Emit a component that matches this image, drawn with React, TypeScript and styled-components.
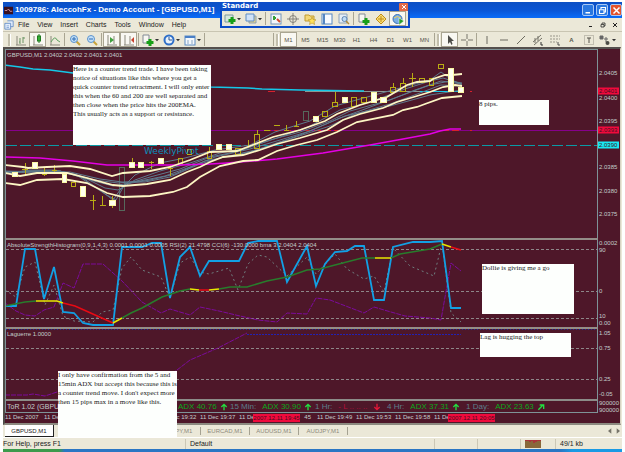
import React from 'react';
import styled, { createGlobalStyle, css } from 'styled-components';

const c = {
  face: '#ebe8d8',
  wine: '#4e1729',
  frame: '#7e9397',
  text: '#c3cdcb',
  cream: '#fdf6c4',
  cyan: '#14c8e8',
  teal: '#0a9aa6',
  magenta: '#e400e4',
  purple: '#86008c',
  yellow: '#b9ac14',
  red: '#f00a3c',
  green: '#0aa81a',
};

const Global = createGlobalStyle`
  * { box-sizing: border-box; }
  body { margin: 0; background: #fff; font-family: "Liberation Sans", Arial, sans-serif; }
  button { font-family: inherit; border: 0; padding: 0; margin: 0; background: none; color: inherit; }
`;

const Desktop = styled.div`
  min-height: 100vh;
  display: flex;
  flex-direction: column;
  padding-top: 2px;
`;

const Window = styled.main`
  position: relative;
  flex: 1;
  display: flex;
  flex-direction: column;
  margin: 0 3px;
  background: ${c.face};
`;

const Taskbar = styled.div`
  height: 3px;
  margin: 0 3px;
  background: linear-gradient(90deg, #3c9a4c 0 9%, #2a76c4 10% 90%, #1a9ae4 92%);
`;

/* ---------- title and menu ---------- */

const TitleBar = styled.header`
  display: flex;
  align-items: center;
  height: 16px;
  padding: 0 0 0 1px;
  background: linear-gradient(#0c50c4, #0a55d4 50%, #0a6cf8);
  color: #fff;
`;

const Title = styled.h1`
  flex: 1;
  margin: 0 0 0 2px;
  font: bold 8px/16px "Liberation Sans", Arial, sans-serif;
  white-space: nowrap;
`;

const WindowButton = styled.button<{ $close?: boolean }>`
  display: grid;
  place-items: center;
  width: 12px;
  height: 12px;
  margin-left: 2px;
  border: 1px solid #a8c8f4;
  border-radius: 2px;
  background: ${(p) => (p.$close ? '#e2532c' : '#2a78e0')};
`;

const MenuBar = styled.nav`
  display: flex;
  align-items: center;
  gap: 4px;
  height: 13px;
  padding: 0 3px 0 1px;
  color: #222;
`;

const Menus = styled.div`
  flex: 1;
  display: flex;
  gap: 8px;
`;

const MenuItem = styled.button`
  font-size: 7px;
  line-height: 12px;
`;

const MdiButton = styled.button`
  display: grid;
  place-items: center;
  width: 8px;
  height: 10px;
`;

const Spacer = styled.span`
  flex: 1;
`;

/* ---------- toolbars ---------- */

const ToolBar = styled.div`
  display: flex;
  align-items: center;
  height: 16px;
  padding: 0 4px;
  border-top: 1px solid #c9c5b2;
`;

const Tool = styled.button<{ $on?: boolean; $wide?: boolean }>`
  display: flex;
  align-items: center;
  justify-content: center;
  gap: 1px;
  width: ${(p) => (p.$wide ? 21 : 17)}px;
  height: 15px;
  font-size: 6px;
  color: #55534a;
  ${(p) =>
    p.$on &&
    css`
      background: #f9f8f2;
      border: 1px solid #a9a592;
    `}
`;

const Divider = styled.span`
  width: 1px;
  height: 13px;
  margin: 0 1px;
  background: #a9a592;
`;

const Grip = styled.span`
  width: 3px;
  height: 12px;
  margin: 0 1px;
  background: #c2beac;
  border-right: 1px solid #fff;
`;

const FloatingBar = styled.section`
  position: absolute;
  left: 217px;
  top: 0;
  width: 190px;
  padding: 0 2px 2px;
  background: #0c4cc8;
`;

const FloatingTitle = styled.div`
  display: flex;
  justify-content: space-between;
  align-items: center;
  height: 9px;
  font: bold 7px/9px "DejaVu Sans", sans-serif;
  color: #fff;
`;

const FloatingClose = styled.button`
  display: grid;
  place-items: center;
  width: 9px;
  height: 8px;
  border-radius: 1px;
  background: #e26a48;
`;

const FloatingTools = styled.div`
  display: flex;
  align-items: center;
  height: 15px;
  background: ${c.face};
`;

/* ---------- charts ---------- */

const ChartArea = styled.section`
  flex: 1;
  display: grid;
  grid-template-rows: 189fr 89fr 72fr 14px 10px;
  margin: 0 1px 0 0;
  border-top: 2px solid #55504e;
  border-bottom: 2px solid #8c8a80;
  border-left: 2px solid #4f4c48;
  border-right: 1px solid #d8d4c4;
  background: ${c.wine};
  color: ${c.text};
  font-size: 6px;
`;

const Row = styled.div`
  display: grid;
  grid-template-columns: 1fr 22px;
  min-height: 0;
`;

const Plot = styled.div<{ $rule: number }>`
  position: relative;
  min-height: 0;
  border-top: ${(p) => p.$rule}px solid ${(p) => (p.$rule > 1 ? '#948d88' : c.frame)};
  border-left: 1px solid ${c.frame};
  border-right: 1px solid ${c.frame};
`;

const Drawing = styled.svg`
  position: absolute;
  inset: 0;
  width: 100%;
  height: 100%;
  fill: none;
`;

const Legend = styled.div`
  position: absolute;
  left: 1px;
  top: 1px;
  line-height: 8px;
  white-space: nowrap;
`;

const PivotLabel = styled.div`
  position: absolute;
  left: 138px;
  top: 95px;
  font: 9px/12px "DejaVu Sans", sans-serif;
  color: #0b8fba;
`;

const Axis = styled.div`
  position: relative;
`;

const AxisLabel = styled.span<{ $at: number; $bg?: string }>`
  position: absolute;
  left: 0;
  top: ${(p) => p.$at}%;
  width: 21px;
  padding-left: 1px;
  transform: translateY(-50%);
  line-height: 7px;
  white-space: nowrap;
  background: ${(p) => p.$bg || 'none'};
  color: ${(p) => (p.$bg ? '#401020' : c.text)};
`;

const Trends = styled.div`
  display: grid;
  grid-template-columns: 172px 52px 85px 72px 79px 1fr;
  align-items: center;
  border: 1px solid ${c.frame};
  border-top-width: 2px;
  border-top-color: #8c8c88;
  font-size: 8px;
  line-height: 10px;
  white-space: nowrap;
`;

const Trend = styled.div`
  display: flex;
  align-items: center;
  gap: 6px;
  color: #5d7e8c;
`;

const TrendLead = styled.span`
  padding-left: 1px;
  font-size: 7px;
  color: ${c.text};
`;

const Adx = styled.span<{ $down?: boolean }>`
  display: flex;
  align-items: center;
  gap: 3px;
  color: ${(p) => (p.$down ? '#c01038' : c.green)};
`;

const Dim = styled.span`
  width: 32px;
  color: #b0103c;
`;

const TimeAxis = styled.div`
  position: relative;
  display: grid;
  grid-template-columns: repeat(12, 39px);
  overflow: hidden;
  line-height: 9px;
  white-space: nowrap;
`;

const TimeLabel = styled.span<{ $end?: boolean }>`
  text-align: ${(p) => (p.$end ? 'right' : 'left')};
  padding-right: ${(p) => (p.$end ? 6 : 0)}px;
`;

const TimeMark = styled.span<{ $x: number }>`
  position: absolute;
  left: ${(p) => p.$x}px;
  top: 1px;
  width: 47px;
  text-align: center;
  line-height: 8px;
  color: #4a0c1c;
  background: ${c.red};
`;

const Note = styled.aside<{ $x: number; $y: number; $w: number; $h: number }>`
  position: absolute;
  left: ${(p) => p.$x}px;
  top: ${(p) => p.$y}px;
  width: ${(p) => p.$w}px;
  height: ${(p) => p.$h}px;
  background: #fdfffd;
  color: #181818;
  font: 7px/9px "Liberation Serif", "Times New Roman", serif;
  white-space: pre;
`;

/* ---------- tabs and status ---------- */

const Tabs = styled.div`
  display: flex;
  align-items: center;
  height: 12px;
  padding-left: 2px;
  color: #8d8a7c;
`;

const Tab = styled.button<{ $on?: boolean }>`
  width: 49px;
  height: ${(p) => (p.$on ? 12 : 8)}px;
  font-size: 6px;
  line-height: 8px;
  border-right: 1px solid ${(p) => (p.$on ? '#222' : '#a5a292')};
  ${(p) =>
    p.$on &&
    css`
      color: #222;
      background: #fff;
      border-bottom: 1px solid #222;
    `}
`;

const Status = styled.footer`
  display: grid;
  grid-template-columns: 182px 1fr 43px 43px 35px 67px;
  align-items: center;
  height: 12px;
  border-top: 1px solid #fff;
  font-size: 7px;
  line-height: 10px;
  color: #222;
`;

const Cell = styled.span`
  display: flex;
  align-items: center;
  height: 10px;
  padding-left: 4px;
  border-left: 1px solid #cbc7b5;
  &:first-child { padding-left: 0; border: 0; }
`;

/* ---------- icons ---------- */

const paths: Record<string, React.ReactNode> = {
  app: (<><rect y="1" width="12" height="10" fill="#3a1020" /><path d="M1 6h3l2-2 2 3h3" stroke="#e8b0c0" /></>),
  doc: (<><path d="M1 4h7v7H1z M4 1h7v7H8" stroke="#5b87c4" fill="#e4eefb" /><path d="M3 7h3M3 9h3" stroke="#7fa4d6" /></>),
  bars: (<><path d="M1 11h10M2 2v9" stroke="#8b897c" /><path d="M5 4v6M4 8h1M8 3v6M8 4h2" stroke="#6b9464" /></>),
  candle: (<><path d="M1 11h10M2 2v9" stroke="#8b897c" /><path d="M7 0v9" stroke="#1e7a1e" /><rect x="5.5" y="2" width="3" height="5" fill="#35b035" stroke="#1e7a1e" /></>),
  line: (<><path d="M1 11h10M2 2v9" stroke="#8b897c" /><path d="M2 8q4-7 6-2l3 2" stroke="#5fa060" /></>),
  zoomIn: (<><path d="M7 7l4 4" stroke="#c8a23a" strokeWidth="2" /><circle cx="5" cy="5" r="3.5" fill="#c4e0f8" stroke="#5c93cc" /><path d="M3 5h4M5 3v4" stroke="#2e6cb4" /></>),
  zoomOut: (<><path d="M7 7l4 4" stroke="#c8a23a" strokeWidth="2" /><circle cx="5" cy="5" r="3.5" fill="#c4e0f8" stroke="#5c93cc" /><path d="M3 5h4" stroke="#2e6cb4" /></>),
  scroll: (<><path d="M1 11h10M2 1v10M8 2v8" stroke="#8b897c" /><path d="M4 3l4 3-4 3z" fill="#3fa03f" /></>),
  shift: (<><path d="M1 11h10M2 1v10M7 2v8" stroke="#8b897c" /><path d="M11 3L8 6l3 3z" fill="#c8402c" /></>),
  addDoc: (<><path d="M1 1h6v8H1z" fill="#f7f7f2" stroke="#838b95" /><path d="M8 5v7M4.5 8.5h7" stroke="#18a018" strokeWidth="3" /></>),
  clock: (<><circle cx="6" cy="6" r="4.5" fill="#e8f2fc" stroke="#2f6fc8" strokeWidth="2" /><path d="M6 3v3h3" stroke="#31578e" /></>),
  template: (<><rect x="1" y="2" width="10" height="9" fill="#f4f8fc" stroke="#5d8cc4" /><path d="M1 3h10" stroke="#4a7fc6" strokeWidth="2" /><path d="M3 7h2M7 7h2M3 9h2M7 9h2" stroke="#8ea8c4" /></>),
  newChart: (<><path d="M1 2h8v7H1z" fill="#d8e8dc" stroke="#7d98a0" /><path d="M8 4v7M4.5 7.5h7" stroke="#18a018" strokeWidth="3" /></>),
  profiles: (<><path d="M4 3h7v7H4z" fill="#e3d38c" stroke="#8aa0b8" /><path d="M1 1h8v7H1z" fill="#cfe2f8" stroke="#5d8cc4" /></>),
  market: (<><rect x="1" y="1" width="10" height="10" fill="#f2f6fa" stroke="#7394b8" /><path d="M4 3v4M3 5h3" stroke="#36a036" strokeWidth="2" /><path d="M7 6l3 3" stroke="#d04a2c" strokeWidth="2" /></>),
  target: (<><circle cx="6" cy="6" r="3.5" stroke="#85837a" /><path d="M6 0v12M0 6h12" stroke="#85837a" /></>),
  star: (<><path d="M1 2h4l1 1h4v5H1z" fill="#f3d877" stroke="#c09a30" /><path d="M8 4l1 2.5 3 .3-2 1.7.6 3L8 10l-2.5 1.5.6-3-2-1.7 3-.3z" fill="#ffe25a" stroke="#b8922a" strokeWidth=".6" /></>),
  terminal: (<><rect x="1" y="1" width="10" height="10" fill="#f8fbff" stroke="#5587c2" /><path d="M3 1v10" stroke="#5587c2" strokeWidth="2" /></>),
  tester: (<><path d="M1 1h8v9H1z" fill="#e4edf6" stroke="#8ca2b8" /><circle cx="6.5" cy="6" r="2.5" fill="#bfdcf6" stroke="#5e86b4" /><path d="M8 8l3 3" stroke="#b08c3c" strokeWidth="1.5" /></>),
  editor: (<path d="M6 1l5 5-5 5-5-5z M6 3v6M3 6h6" fill="#f8dc70" stroke="#c08c18" />),
  expert: (<><circle cx="5.5" cy="6" r="4.5" fill="#78aee4" stroke="#3b70b4" /><path d="M2 5q3-3 7 0" stroke="#f0d060" /><path d="M7 5l5 3-5 4z" fill="#27a02a" stroke="#fff" strokeWidth=".5" /></>),
  cursor: (<path d="M4 1v9l2-2 1.5 3 1-1L7.5 7H10z" fill="#4c4c48" />),
  cross: (<path d="M6 0v5M6 7v5M0 6h5M7 6h5" stroke="#77756a" />),
  vline: <path d="M6 2v8" stroke="#6d6b60" />,
  hline: <path d="M2 6h8" stroke="#6d6b60" />,
  trend: <path d="M2 10l8-8" stroke="#6d6b60" />,
  channel: (<><path d="M1 8l8-7M2 11l8-7M3 4v5M6 2v5" stroke="#77756a" /><path d="M9 8v3h2" stroke="#333" /></>),
  fibo: (<><path d="M1 2h10M1 5h10M1 8h7" stroke="#99968a" strokeDasharray="2 1" /><path d="M9 8v3h2" stroke="#555" /></>),
  labelT: (<><rect x="1.5" y="1.5" width="9" height="9" stroke="#99968a" strokeDasharray="1 1" /><path d="M4 4h4M6 4v5" stroke="#55534a" /></>),
  shapes: (<><path d="M1 2h3v3H1z M5 5h4M7 3v5" fill="#666" stroke="#666" /><circle cx="8.5" cy="9" r="2" fill="#4b4b46" /></>),
  up: <path d="M6 11V2M2 6l4-4 4 4" stroke="#22e040" strokeWidth="2" />,
  down: <path d="M6 1v9M2 6l4 4 4-4" stroke="#e41838" strokeWidth="2" />,
  upRight: <path d="M2 10l7-7M4 3h6v6" stroke="#22e040" strokeWidth="2" />,
  min: <path d="M2 9h6" stroke="currentColor" strokeWidth="2" />,
  restore: <path d="M2 5h6v5H2z M4 4V2h6v6H8" stroke="currentColor" strokeWidth="1.5" />,
  close: <path d="M2 2l8 8M10 2l-8 8" stroke="currentColor" strokeWidth="2" />,
  drop: <path d="M0 3h12L6 10z" fill="#333" />,
  left: <path d="M8 2v8L3 6z" fill="#77756a" />,
  right: <path d="M4 2v8l5-4z" fill="#77756a" />,
};

const Svg = styled.svg`
  display: block;
  flex: none;
`;

const Icon = ({ name, size = 12 }: { name: string; size?: number }) => (
  <Svg width={size} height={size} viewBox="0 0 12 12" fill="none" aria-hidden>
    {paths[name]}
  </Svg>
);

const IconTool = ({ name, on, drop }: { name: string; on?: boolean; drop?: boolean }) => (
  <Tool $on={on} $wide={drop} aria-label={name}>
    <Icon name={name} />
    {drop && <Icon name="drop" size={4} />}
  </Tool>
);

/* ---------- chart data, in chart units ---------- */

const upper = '5,165 23,167 28,168 47,167 70,166 90,169 112,176 123,173 150,171 170,167 190,160 210,152 237,151 250,146 273,137 300,130 325,121 337,114 360,105 387,97 407,85 417,82 430,81 433,79 445,75 452,75 462,74';
const middle = '5,173 20,176 37,173 67,173 87,178 113,185 123,186 147,184 170,180 187,172 200,167 210,162 223,157 243,155 260,150 277,144 300,138 327,130 343,120 360,114 383,108 397,102 417,96 430,92 443,87 455,85 462,86';
const lower = '5,183 20,185 37,180 63,179 87,183 107,193 123,197 150,196 173,192 187,187 200,177 220,166 243,161 258,160 277,151 297,145 317,140 337,132 357,122 393,115 403,110 417,107 425,104 442,98 462,96';
const averages = [
  '5,174 30,170 55,170 80,176 100,190 113,200 120,190 135,175 160,163 185,158 215,150 250,145 275,132 310,121 335,106 360,99 400,88 430,80 441,72 452,80 462,85',
  '5,173 30,171 60,171 85,178 105,188 118,190 135,180 160,171 190,163 220,153 250,147 280,137 310,126 340,110 370,102 405,89 430,81 443,78 462,84',
  '5,172 30,171 60,171 90,180 113,186 130,183 150,177 180,169 210,157 240,151 270,140 300,132 330,121 350,111 390,100 415,90 441,81 462,84',
  '5,172 40,171 65,172 95,180 118,183 140,181 165,176 190,167 215,157 250,149 280,140 310,131 340,118 365,109 400,96 430,85 450,81 462,83',
  '5,171 40,172 70,172 100,179 122,182 145,182 170,177 200,164 220,158 260,149 290,139 330,126 355,114 390,104 420,93 441,85 462,86',
  '5,172 40,173 75,174 105,194 116,200 125,184 150,180 175,174 205,161 250,152 300,135 345,116 390,106 430,95 462,90',
];

const filled = [
  [12, 172, 6, 4], [32, 162, 6, 6], [62, 174, 5, 8], [80, 186, 6, 10], [109, 200, 7, 5], [129, 162, 6, 5],
  [138, 162, 6, 5], [158, 158, 6, 5], [216, 144, 6, 5], [226, 144, 6, 5], [313, 116, 6, 5], [342, 97, 6, 5],
  [371, 92, 6, 10], [380, 97, 7, 5], [448, 68, 6, 23], [458, 87, 6, 5],
];
const hollow = [
  [71, 182, 5, 4], [178, 158, 5, 5], [187, 149, 5, 5], [207, 151, 5, 7], [235, 148, 6, 6], [254, 134, 6, 14],
  [322, 111, 6, 5], [332, 102, 6, 4], [351, 97, 6, 9], [361, 97, 6, 5], [390, 87, 6, 5],
  [400, 83, 6, 8], [419, 78, 6, 4], [429, 78, 5, 7], [438, 64, 6, 4],
];
const ghosts = [[119, 167, 6, 43], [303, 111, 6, 9]];
const wicks = 'M25.5 163v12M22 169.5h6M44.5 168v8M42 174.5h5M54.5 165v7M52 170.5h5M93.5 195v15M90 200.5h6M102.5 196v10M100 205.5h6M112.5 196v12M132.5 158v4M151.5 161v8M149 162.5h5M170.5 165v11M168 168.5h5M209.5 147v4M248.5 140v8M257.5 130v4M264 130.5h6M274 125.5h6M286.5 125v5M284 130.5h5M296.5 121v5M294 126.5h5M335.5 92v10M393.5 83v4M403.5 78v5M412.5 73v14M409 78.5h7';

const strength = '5,306 16,306 25,249 35,249 44,299 54,267 63,312 74,313 83,323 93,325 113,325 122,247 142,247 152,243 161,243 170,298 180,257 190,247 200,276 209,261 239,261 248,243 258,241 277,241 287,282 307,246 316,286 325,264 335,252 347,251 355,246 364,246 374,300 384,300 393,247 413,242 430,242 442,241 451,308 461,308';
const rsi = '5,290 16,297 25,267 35,262 45,305 54,285 63,316 74,321 93,322 102,312 113,310 122,268 131,257 142,270 161,277 170,298 180,263 190,257 200,272 209,274 229,268 238,290 248,264 258,255 267,257 287,276 307,257 316,274 335,254 347,269 364,279 374,276 384,292 393,248 410,266 434,276 442,243 451,313 461,322';
const cci = '5,303 16,311 25,315 35,316 44,310 54,307 63,283 74,288 83,264 103,264 122,281 142,302 161,313 170,309 190,315 200,307 219,311 240,316 258,320 277,322 287,313 307,314 316,298 330,300 364,313 374,307 384,310 405,316 430,318 441,320 451,263 461,271';
const smoothed: [string, string][] = [
  ['#287c2c', '5,306 25,302 36,301'], ['#e8e800', '36,301 57,301 63,303'], ['#e80a14', '63,303 75,306 113,323'],
  ['#e8e800', '113,323 122,318'], ['#287c2c', '122,318 131,313 142,308 162,297 180,291 190,289'],
  ['#e8e800', '190,289 199,290'], ['#e80a14', '199,290 209,290'], ['#e8e800', '209,290 219,289'],
  ['#287c2c', '219,289 230,287 247,287 267,281 287,277 307,270 320,269 335,265 362,258 375,258'],
  ['#e8e800', '375,258 391,258'], ['#287c2c', '391,258 400,254 430,249 442,244'],
  ['#e8e800', '442,244 451,247'], ['#e80a14', '451,247 461,250'],
];

const rects = (list: number[][], fill: string, stroke: string) =>
  list.map(([x, y, w, h]) => (
    <rect key={`${x}-${y}`} x={x + 0.5} y={y + 0.5} width={w - 1} height={h} fill={fill} stroke={stroke} />
  ));

const Levels = ({ at }: { at: number[] }) => (
  <>
    {at.map((y) => (
      <path key={y} d={`M6 ${y + 0.5}H597`} stroke="#8d8688" strokeDasharray="3 2" />
    ))}
  </>
);

const Scale = ({ from, span, items }: { from: number; span: number; items: [number, string, string?][] }) => (
  <Axis>
    {items.map(([y, label, bg]) => (
      <AxisLabel key={y} $at={((y - from) / span) * 100} $bg={bg}>{label}</AxisLabel>
    ))}
  </Axis>
);

const times = [
  '11 Dec 2007', '11 Dec 19:16', '11 Dec 19:20', '11 Dec 19:24', '11 Dec 19:32', '11 Dec 19:37',
  '11 De', '45', '11 Dec 19:49', '11 Dec 19:53', '11 Dec 19:58', '11 De',
];

export default function App() {
  return (
    <Desktop>
      <Global />
      <Window>
        <TitleBar>
          <Icon name="app" size={9} />
          <Title>1009786: AleccohFx - Demo Account - [GBPUSD,M1]</Title>
          <WindowButton aria-label="Minimize"><Icon name="min" size={9} /></WindowButton>
          <WindowButton aria-label="Restore"><Icon name="restore" size={9} /></WindowButton>
          <WindowButton $close aria-label="Close"><Icon name="close" size={9} /></WindowButton>
        </TitleBar>

        <MenuBar>
          <Icon name="doc" size={10} />
          <Menus>
            {['File', 'View', 'Insert', 'Charts', 'Tools', 'Window', 'Help'].map((m) => (
              <MenuItem key={m}>{m}</MenuItem>
            ))}
          </Menus>
          <MdiButton aria-label="Minimize chart"><Icon name="min" size={6} /></MdiButton>
          <MdiButton aria-label="Restore chart"><Icon name="restore" size={6} /></MdiButton>
          <MdiButton aria-label="Close chart"><Icon name="close" size={6} /></MdiButton>
        </MenuBar>

        <ToolBar>
          <Grip />
          <IconTool name="bars" />
          <IconTool name="candle" on />
          <IconTool name="line" />
          <Divider />
          <IconTool name="zoomIn" />
          <IconTool name="zoomOut" />
          <Divider />
          <IconTool name="scroll" on />
          <IconTool name="shift" on />
          <Divider />
          <IconTool name="addDoc" drop />
          <IconTool name="clock" drop />
          <IconTool name="template" drop />
          <Divider />
          <Spacer />
          <Divider />
          <Grip />
          {['M1', 'M5', 'M15', 'M30', 'H1', 'H4', 'D1', 'W1', 'MN'].map((t) => (
            <Tool key={t} $on={t === 'M1'}>{t}</Tool>
          ))}
          <Divider />
          <Grip />
          <IconTool name="cursor" on />
          <IconTool name="cross" />
          <Divider />
          <IconTool name="vline" />
          <IconTool name="hline" />
          <IconTool name="trend" />
          <IconTool name="channel" />
          <IconTool name="fibo" />
          <Tool><b>A</b></Tool>
          <IconTool name="labelT" />
          <IconTool name="shapes" drop />
        </ToolBar>

        <ChartArea>
          <Row>
            <Plot $rule={1}>
              <Drawing viewBox="6 50 591 188" preserveAspectRatio="none">
                <path d="M6 130.5H597" stroke={c.purple} />
                <path d="M6 145.5H597" stroke={c.teal} strokeDasharray="11 3" />
                <path d="M305 91.5H462" stroke="#8b9792" />
                <polyline points="5,65 20,67 33,69 50,70 73,73 140,81 211,87 248,88 262,89 300,90 364,91" stroke={c.cyan} strokeWidth="1.5" />
                <path d="M420 91.5h41" stroke={c.cyan} />
                <path d="M268 91.5h10M264 130.5h74M470 91.5h2M442 130.5h18M470 130.5h2" stroke="#d8202c" strokeDasharray="7 3" />
                {rects(ghosts, 'none', '#56685c')}
                {averages.map((p) => (
                  <polyline key={p} points={p} stroke="#5f7b8d" />
                ))}
                <path d={wicks} stroke={c.yellow} />
                {rects(hollow, 'none', c.yellow)}
                <polyline points="5,157 40,158 73,161 107,165 127,165 180,165 210,164 227,163 253,161 277,159 323,153 370,145 403,139 430,134 440,131 450,129 461,129" stroke={c.magenta} strokeWidth="1.5" />
                {[upper, middle, lower].map((p) => (
                  <polyline key={p} points={p} stroke={c.cream} strokeWidth="1.8" />
                ))}
                {rects(filled, '#ffffee', '#fbf9a4')}
              </Drawing>
              <Legend>GBPUSD,M1 2.0402 2.0402 2.0401 2.0401</Legend>
              <PivotLabel>WeeklyPivot</PivotLabel>
            </Plot>
            <Scale
              from={49}
              span={189}
              items={[
                [73, '2.0405'], [98, '2.0400'], [91, '2.0401', c.red], [121, '2.0395'], [130, '2.0393', c.red],
                [145, '2.0390', '#18e8f4'], [167, '2.0385'], [191, '2.0380'], [214, '2.0375'],
              ]}
            />
          </Row>

          <Row>
            <Plot $rule={2}>
              <Drawing viewBox="6 240 591 87" preserveAspectRatio="none">
                <Levels at={[249, 291, 318]} />
                <polyline points={rsi} stroke="#6f7f80" strokeDasharray="2 3" />
                <polyline points={cci} stroke="#7c0b9c" strokeDasharray="5 1" />
                <polyline points={strength} stroke="#12a0e4" strokeWidth="1.8" />
                {smoothed.map(([color, p]) => (
                  <polyline key={p} points={p} stroke={color} strokeWidth="1.5" />
                ))}
              </Drawing>
              <Legend>AbsoluteStrengthHistogram(0,9,1,4,3) 0.0001 0.0001 0.0005 RSI(2) 21.4798 CCI(6) -130.0000 bma 3 2.0404 2.0404</Legend>
            </Plot>
            <Scale from={238} span={89} items={[[243, '0.0002'], [250, '90'], [291, '0'], [316, '10'], [323, '0.00']]} />
          </Row>

          <Row>
            <Plot $rule={2}>
              <Drawing viewBox="6 329 591 70" preserveAspectRatio="none">
                <path d="M6 329.5H597" stroke="#1c2aa0" strokeDasharray="1 2" />
                <Levels at={[348, 379]} />
                <path d="M247 334.5H461" stroke="#2222b4" strokeDasharray="2 1" />
                <polyline points="5,395 27,395 33,394 45,396 60,391 150,391 177,370 190,360 218,348 247,333" stroke="#7c0b9c" strokeDasharray="5 1" />
              </Drawing>
              <Legend>Laguerre 1.0000</Legend>
            </Plot>
            <Scale from={327} span={72} items={[[333, '1.05'], [348, '0.75'], [379, '0.25'], [394, '-0.05']]} />
          </Row>

          <Row>
            <Trends>
              <TrendLead>ToR 1.02 (GBPUSD</TrendLead>
              <Trend><Adx>ADX 40.76 <Icon name="up" size={8} /></Adx></Trend>
              <Trend>15 Min:<Adx>ADX 30.90 <Icon name="up" size={8} /></Adx></Trend>
              <Trend>1 Hr:<Adx $down><Dim>- L .. .. ..</Dim><Icon name="down" size={8} /></Adx></Trend>
              <Trend>4 Hr:<Adx>ADX 37.31 <Icon name="up" size={8} /></Adx></Trend>
              <Trend>1 Day:<Adx>ADX 23.63 <Icon name="upRight" size={8} /></Adx></Trend>
            </Trends>
            <Scale from={0} span={14} items={[[4, '900000'], [11, '900000']]} />
          </Row>

          <TimeAxis>
            {times.map((t, i) => (
              <TimeLabel key={i} $end={t === '45'}>{t}</TimeLabel>
            ))}
            <TimeMark $x={248}>2007.12.11 19:45</TimeMark>
            <TimeMark $x={443}>2007.12.11 20:05</TimeMark>
          </TimeAxis>
        </ChartArea>

        <Tabs>
          <Tab $on>GBPUSD,M1</Tab>
          {['EURUSD,M1', 'USDCHF,M1', 'USDJPY,M1', 'EURCAD,M1', 'AUDUSD,M1', 'AUDJPY,M1'].map((t) => (
            <Tab key={t}>{t}</Tab>
          ))}
          <Spacer />
          <MdiButton aria-label="Previous tab"><Icon name="left" size={8} /></MdiButton>
          <MdiButton aria-label="Next tab"><Icon name="right" size={8} /></MdiButton>
        </Tabs>

        <Status>
          <Cell>For Help, press F1</Cell>
          <Cell>Default</Cell>
          <Cell />
          <Cell />
          <Cell>
            <Svg width="16" height="8" viewBox="0 0 16 8">
              <path d="M0 0h16v8H0z" fill="#a8353a" />
              <path d="M1 1v7M3 1v7M5 2v6M7 1v7M9 3v5M11 2v6M13 1v7M15 1v7" stroke="#6b9c3c" />
            </Svg>
          </Cell>
          <Cell>49/1 kb</Cell>
        </Status>

        <FloatingBar aria-label="Standard toolbar">
          <FloatingTitle>
            Standard
            <FloatingClose aria-label="Close toolbar"><Icon name="close" size={6} /></FloatingClose>
          </FloatingTitle>
          <FloatingTools>
            <IconTool name="newChart" drop />
            <IconTool name="profiles" drop />
            <Divider />
            <IconTool name="market" />
            <IconTool name="target" />
            <IconTool name="star" />
            <IconTool name="terminal" />
            <IconTool name="tester" />
            <Divider />
            <IconTool name="addDoc" />
            <IconTool name="editor" />
            <IconTool name="expert" on />
          </FloatingTools>
        </FloatingBar>

        <Note $x={70} $y={63} $w={138} $h={80}>
          {'Here is a counter trend trade. I have been taking\nnotice of situations like this where you get a\nquick counter trend retractment. I will only enter\nthis when the 60 and 200 are well separated and\nthen close when the price hits the 200EMA.\nThis usually acts as a support or resistance.'}
        </Note>
        <Note $x={476} $y={98} $w={70} $h={25}>8 pips.</Note>
        <Note $x={479} $y={262} $w={92} $h={50}>Dollie is giving me a go</Note>
        <Note $x={477} $y={331} $w={91} $h={24}>Lag is hugging the top</Note>
        <Note $x={55} $y={369} $w={119} $h={66}>
          {"I only have confirmation from the 5 and\n15min ADX but accept this because this is\na counter trend move. I don't expect more\nthen 15 pips max in a move like this."}
        </Note>
      </Window>
      <Taskbar />
    </Desktop>
  );
}
